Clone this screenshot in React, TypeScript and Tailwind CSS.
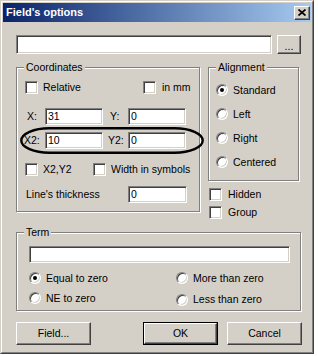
import React from "react";

const sunken =
  "bg-white border border-t-[#808080] border-l-[#808080] border-r-white border-b-white shadow-[inset_1px_1px_0_#404040,inset_-1px_-1px_0_#D4D0C8]";
const raised =
  "bg-[#D4D0C8] border border-t-white border-l-white border-r-[#404040] border-b-[#404040] shadow-[inset_-1px_-1px_0_#808080]";

function Check({ label, gap = "ml-[5px]" }: { label: string; gap?: string }) {
  return (
    <div className="flex items-center">
      <div className={`w-[13px] h-[13px] shrink-0 ${sunken}`} />
      <span className={`${gap} leading-[13px]`}>{label}</span>
    </div>
  );
}

function Radio({ label, checked = false }: { label: string; checked?: boolean }) {
  return (
    <div className="flex items-center">
      <div className="w-[12px] h-[12px] shrink-0 rounded-full bg-white border border-t-[#808080] border-l-[#808080] border-r-white border-b-white shadow-[inset_1px_1px_0_#404040,inset_-1px_-1px_0_#D4D0C8] flex items-center justify-center">
        {checked && <div className="w-[4px] h-[4px] rounded-full bg-black" />}
      </div>
      <span className="ml-[5px] leading-[13px]">{label}</span>
    </div>
  );
}

function Group({
  label,
  className,
  children,
}: {
  label: string;
  className: string;
  children?: React.ReactNode;
}) {
  return (
    <div
      className={`relative border border-[#808080] shadow-[inset_1px_1px_0_#ffffff,1px_1px_0_#ffffff] ${className}`}
    >
      <span className="absolute -top-[8px] left-[7px] bg-[#D4D0C8] px-[2px] leading-[14px]">
        {label}
      </span>
      {children}
    </div>
  );
}

function Field({ value = "", className }: { value?: string; className: string }) {
  return (
    <div className={`${sunken} ${className} pl-[2px] flex items-center leading-[13px]`}>
      {value}
    </div>
  );
}

export default function App() {
  return (
    <div
      className="w-[314px] h-[354px] border border-t-[#D4D0C8] border-l-[#D4D0C8] border-r-[#404040] border-b-[#404040] text-black text-[10.5px]"
      style={{ fontFamily: '"Liberation Sans", Arial, sans-serif' }}
    >
      <div className="h-full border border-t-white border-l-white border-r-[#808080] border-b-[#808080] bg-[#D4D0C8] p-px flex flex-col">
        {/* Title bar */}
        <div className="h-[19px] shrink-0 flex items-center bg-[linear-gradient(to_right,#0A246A,#A6CAF0)] pl-[3px] pr-[1px]">
          <span className="text-white font-bold text-[11px] leading-[13px]">Field's options</span>
          <div className={`ml-auto w-[16px] h-[14px] ${raised} flex items-center justify-center`}>
            <svg width="8" height="7" viewBox="0 0 8 7">
              <path d="M0.5 0.5 L7.5 6.5 M7.5 0.5 L0.5 6.5" stroke="black" strokeWidth="1.7" />
            </svg>
          </div>
        </div>

        {/* Body */}
        <div className="pl-[13px] flex flex-col">
          {/* Name row */}
          <div className="mt-[13px] flex">
            <div className={`w-[256px] h-[19px] ${sunken}`} />
            <div className={`ml-[5px] w-[24px] h-[19px] ${raised} flex items-end justify-center pb-[3px] leading-[8px]`}>
              ...
            </div>
          </div>

          {/* Middle */}
          <div className="mt-[13px] flex items-start">
            <Group label="Coordinates" className="w-[184px] h-[145px]">
              <div className="pl-[8px] flex flex-col">
                <div className="mt-[13px] flex items-center">
                  <div className="w-[118px]">
                    <Check label="Relative" />
                  </div>
                  <Check label="in mm" gap="ml-[6px]" />
                </div>
                <div className="mt-[14px] flex items-center">
                  <span className="w-[20px] pl-[2px]">X:</span>
                  <Field value="31" className="w-[58px] h-[17px]" />
                  <span className="w-[25px] pl-[7px]">Y:</span>
                  <Field value="0" className="w-[58px] h-[17px]" />
                </div>
                <div className="mt-[7px] flex items-center">
                  <span className="w-[20px] -ml-[1px] pl-[0px]">X2:</span>
                  <Field value="10" className="w-[58px] ml-[1px] h-[17px]" />
                  <span className="w-[25px] pl-[5px]">Y2:</span>
                  <Field value="0" className="w-[58px] h-[17px]" />
                </div>
                <div className="mt-[14px] flex items-center">
                  <div className="w-[68px]">
                    <Check label="X2,Y2" />
                  </div>
                  <Check label="Width in symbols" />
                </div>
                <div className="mt-[10px] flex items-center">
                  <span className="w-[103px] pl-[1px]">Line's thickness</span>
                  <Field value="0" className="w-[59px] h-[17px]" />
                </div>
              </div>
              <svg
                className="absolute left-[3px] top-[59px]"
                width="184"
                height="27"
                viewBox="0 0 184 27"
              >
                <rect
                  x="1.3"
                  y="1.3"
                  width="181.4"
                  height="24.4"
                  rx="28"
                  ry="12.2"
                  fill="none"
                  stroke="black"
                  strokeWidth="2.4"
                />
              </svg>
            </Group>

            <div className="ml-[8px] w-[91px] flex flex-col">
              <Group label="Alignment" className="w-[91px] h-[114px]">
                <div className="mt-[10px] pl-[7px] flex flex-col">
                  <div className="h-[24px] flex items-center">
                    <Radio label="Standard" checked />
                  </div>
                  <div className="h-[24px] flex items-center">
                    <Radio label="Left" />
                  </div>
                  <div className="h-[24px] flex items-center">
                    <Radio label="Right" />
                  </div>
                  <div className="h-[24px] flex items-center">
                    <Radio label="Centered" />
                  </div>
                </div>
              </Group>
              <div className="mt-[7px] pl-[1px]">
                <Check label="Hidden" gap="ml-[6px]" />
              </div>
              <div className="mt-[5px] pl-[1px]">
                <Check label="Group" gap="ml-[6px]" />
              </div>
            </div>
          </div>

          {/* Term */}
          <Group label="Term" className="mt-[13px] w-[285px] h-[79px]">
            <div className="pl-[12px] flex flex-col">
              <div className={`mt-[13px] w-[261px] h-[17px] ${sunken}`} />
              <div className="mt-[5px] grid grid-cols-[147px_1fr]">
                <div className="h-[20px] flex items-center">
                  <Radio label="Equal to zero" checked />
                </div>
                <div className="h-[20px] flex items-center">
                  <Radio label="More than zero" />
                </div>
                <div className="h-[20px] flex items-center">
                  <Radio label="NE to zero" />
                </div>
                <div className="h-[20px] flex items-center pt-[3px]">
                  <Radio label="Less than zero" />
                </div>
              </div>
            </div>
          </Group>

          {/* Buttons */}
          <div className="mt-[11px] flex">
            <div className={`w-[75px] h-[23px] ${raised} flex items-center justify-center`}>
              Field...
            </div>
            <div className="ml-[52px] w-[75px] h-[23px] border border-black">
              <div className={`w-full h-full ${raised} flex items-center justify-center`}>OK</div>
            </div>
            <div className={`ml-[9px] w-[75px] h-[23px] ${raised} flex items-center justify-center`}>
              Cancel
            </div>
          </div>
        </div>
      </div>
    </div>
  );
}
